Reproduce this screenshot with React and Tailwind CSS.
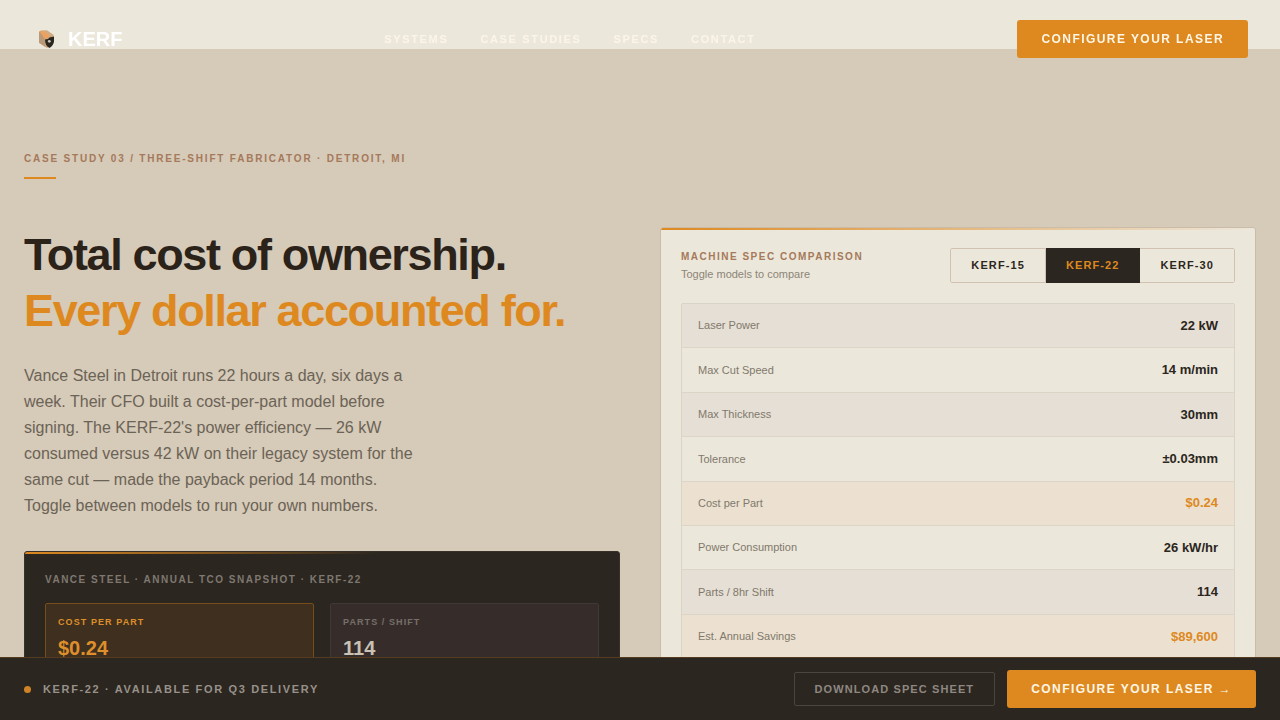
import { useState } from "react";

const NAV = ["Systems", "Case Studies", "Specs", "Contact"];
const MODELS = ["KERF-15", "KERF-22", "KERF-30"];

const SPECS = [
  { label: "Laser Power", value: "22 kW" },
  { label: "Max Cut Speed", value: "14 m/min" },
  { label: "Max Thickness", value: "30mm" },
  { label: "Tolerance", value: "±0.03mm" },
  { label: "Cost per Part", value: "$0.24", accent: true },
  { label: "Power Consumption", value: "26 kW/hr" },
  { label: "Parts / 8hr Shift", value: "114" },
  { label: "Est. Annual Savings", value: "$89,600", accent: true },
];

function Logo() {
  return (
    <svg viewBox="0 0 28 28" className="size-7" aria-hidden="true">
      <path d="M7 6.500 9 5.500h6l6.500 4.500v7l-6.500 6-8-5z" fill="#cfa478" />
      <path d="M9 6 15 5.500l6.500 4.500-5.500 2z" fill="#d3ab82" />
      <path d="M7 7l6 4.500V21.500l-6-4z" fill="#b89a7a" />
      <path d="M8 6.500l3-.5 6 4.500-2 2.500-2 1.500z" fill="#eda15c" />
      <path d="M13 14.500l3-.5 1.500-1.500 4.500-1v5c-.5 2.800-2 5-4.500 6.500-2.700-1.500-4.500-4-4.500-8.500z" fill="#2b2620" />
      <circle cx="17.300" cy="16.300" r="1.400" fill="#cfc8bb" />
    </svg>
  );
}

function Header() {
  return (
    <header className="fixed inset-x-0 top-0 z-20 flex items-center justify-between px-8 py-5">
      <a href="#top" className="flex items-center gap-2 text-xl leading-7 font-bold text-white">
        <Logo />
        KERF
      </a>
      <nav className="flex gap-8">
        {NAV.map((item) => (
          <a key={item} href="#top" className="text-[11px] font-bold tracking-[0.15em] text-[#fcf4ea] uppercase">
            {item}
          </a>
        ))}
      </nav>
      <button className="rounded-[3px] bg-[#de891f] px-6 py-3 text-xs leading-[14px] font-bold tracking-[0.12em] text-[#fdf6e6] uppercase">
        Configure your laser
      </button>
    </header>
  );
}

function Stat({ label, value, accent }) {
  return (
    <div
      className={
        accent
          ? "rounded-xs border border-[#774d1c] bg-[#3f2f1e] p-3 text-[#de8f2c]"
          : "rounded-xs border border-[#3f3935] bg-[#362d2a] p-3 text-[#c9c1b4]"
      }
    >
      <div className={accent ? "text-[9px] leading-3 font-bold tracking-[0.12em] uppercase" : "text-[9px] leading-3 font-bold tracking-[0.12em] text-[#77706a] uppercase"}>
        {label}
      </div>
      <div className="mt-2 text-xl leading-6 font-bold">{value}</div>
    </div>
  );
}

function Snapshot() {
  return (
    <section className="mt-8 overflow-hidden rounded-[3px] border border-[#38312a] bg-[#2b2620]">
      <div className="h-0.5 bg-linear-to-r from-[#de891f] to-transparent to-60%" />
      <div className="px-5 pt-[18px] pb-5">
        <h2 className="text-[10px] leading-[15px] font-bold tracking-[0.15em] text-[#7f7870] uppercase">
          Vance Steel · Annual TCO Snapshot · KERF-22
        </h2>
        <div className="mt-4 grid grid-cols-2 gap-4">
          <Stat label="Cost per part" value="$0.24" accent />
          <Stat label="Parts / shift" value="114" />
        </div>
      </div>
    </section>
  );
}

function rowColor(row, index) {
  if (row.accent) return "bg-[#ece1d0]";
  return index % 2 === 0 ? "bg-[#e6dfd5]" : "";
}

function Comparison() {
  const [model, setModel] = useState("KERF-22");
  return (
    <section className="self-start overflow-hidden rounded-[3px] border border-[#cbbcaa] bg-[#ece7db]">
      <div className="h-0.5 bg-linear-to-r from-[#de891f] to-transparent" />
      <div className="px-5 pt-[18px] pb-5">
        <div className="flex items-center justify-between">
          <div>
            <h2 className="text-[10px] leading-4 font-bold tracking-[0.15em] text-[#a5795a] uppercase">
              Machine spec comparison
            </h2>
            <p className="mt-px text-[11px] leading-4 text-[#8b8577]">Toggle models to compare</p>
          </div>
          <div className="flex overflow-hidden rounded-xs">
            {MODELS.map((name) => (
              <button
                key={name}
                aria-pressed={name === model}
                onClick={() => setModel(name)}
                className={
                  name === model
                    ? "border border-l-0 border-[#2b2620] bg-[#2b2620] px-5 py-2.5 text-[11px] leading-[13px] font-bold tracking-widest text-[#de891f] first:border-l"
                    : "border border-l-0 border-[#d2c0b0] px-5 py-2.5 text-[11px] leading-[13px] font-bold tracking-widest text-[#2b2620] first:rounded-l-xs first:border-l last:rounded-r-xs"
                }
              >
                {name}
              </button>
            ))}
          </div>
        </div>
        <table className="mt-5 h-[357px] w-full border-separate border-spacing-0 rounded-xs border border-[#dad4c6]">
          <tbody>
            {SPECS.map((row, index) => (
              <tr key={row.label} className={rowColor(row, index)}>
                <th
                  scope="row"
                  className="border-b border-[#dcd5c7] px-4 text-left text-[11px] font-normal text-[#7f796c]"
                >
                  {row.label}
                </th>
                <td
                  className={
                    row.accent
                      ? "border-b border-[#dcd5c7] px-4 text-right text-[13px] font-bold text-[#de891f]"
                      : "border-b border-[#dcd5c7] px-4 text-right text-[13px] font-bold text-[#2b2620]"
                  }
                >
                  {row.value}
                </td>
              </tr>
            ))}
          </tbody>
        </table>
      </div>
    </section>
  );
}

function DeliveryBar() {
  return (
    <div className="fixed inset-x-0 bottom-0 z-20 flex items-center justify-between border-t border-[#553b20] bg-[#2b2620] px-6 py-3">
      <div className="flex items-center gap-3 text-[11px] leading-4 font-bold tracking-[0.15em] text-[#98918a] uppercase">
        <span className="size-[7px] rounded-full bg-[#d08325]" />
        KERF-22 · Available for Q3 delivery
      </div>
      <div className="flex items-center gap-3">
        <button className="rounded-xs border border-[#4b453e] px-5 py-2.5 text-[11px] leading-3 font-bold tracking-widest text-[#8f8880] uppercase">
          Download spec sheet
        </button>
        <button className="rounded-[3px] bg-[#de891f] px-6 py-3 text-xs leading-[14px] font-bold tracking-[0.12em] text-[#fdf6e6] uppercase">
          Configure your laser →
        </button>
      </div>
    </div>
  );
}

export default function App() {
  return (
    <div id="top" className="min-h-screen bg-[#d6cab9] font-['Liberation_Sans',Arial,sans-serif] text-[#2b2319]">
      <Header />
      <div className="h-[49px] bg-[#ece7db]" />
      <main className="mx-auto max-w-7xl px-6 pt-24 pb-24">
        <p className="text-[10px] leading-7 font-bold tracking-[0.18em] text-[#a5795a] uppercase">
          Case Study 03 / Three-shift fabricator · Detroit, MI
        </p>
        <div className="mt-1 mb-12 h-0.5 w-8 bg-[#de891f]" />
        <div className="grid grid-cols-2 gap-10">
          <div>
            <h1 className="text-[45px] leading-[56px] font-bold tracking-[-0.03em]">
              Total cost of ownership.
              <span className="block text-[#de891f]">Every dollar accounted for.</span>
            </h1>
            <p className="mt-6 max-w-[400px] text-base leading-[26px] text-[#6b6355]">
              Vance Steel in Detroit runs 22 hours a day, six days a week. Their CFO built a
              cost-per-part model before signing. The KERF-22's power efficiency — 26 kW consumed
              versus 42 kW on their legacy system for the same cut — made the payback period 14
              months. Toggle between models to run your own numbers.
            </p>
            <Snapshot />
          </div>
          <Comparison />
        </div>
      </main>
      <DeliveryBar />
    </div>
  );
}
